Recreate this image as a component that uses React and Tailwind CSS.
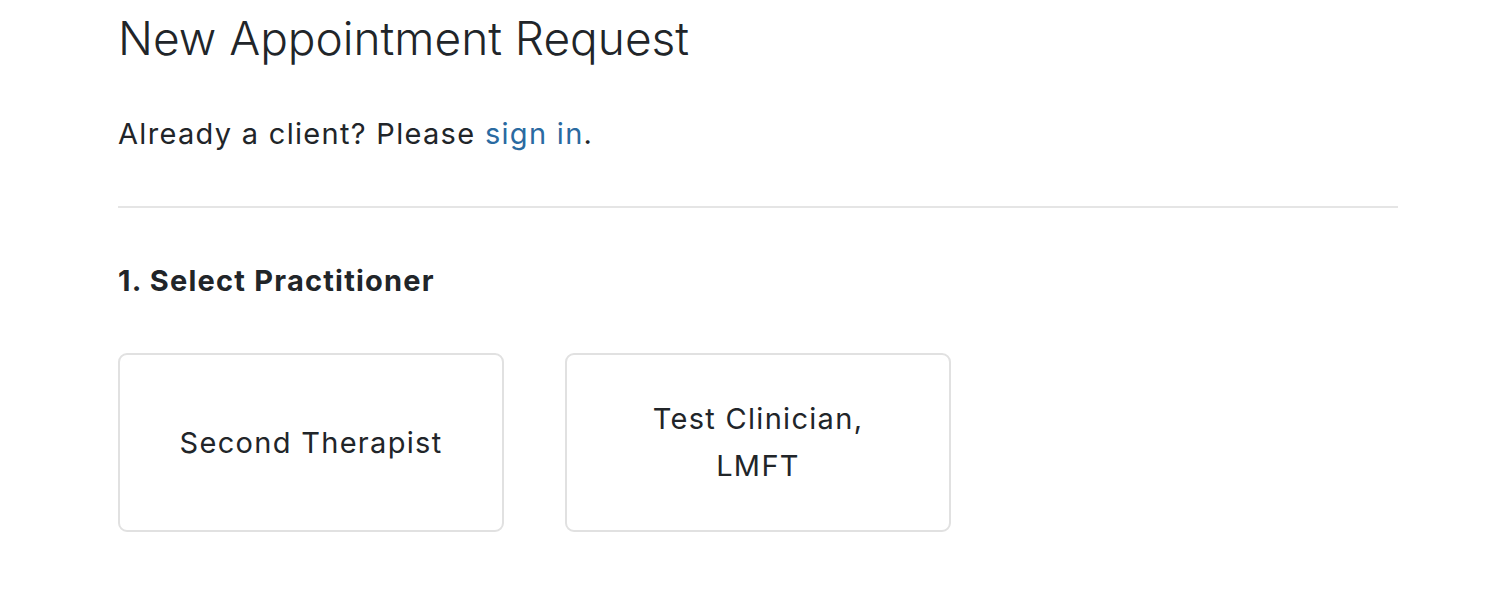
export default function App() {
  const practitioners = ["Second Therapist", "Test Clinician, LMFT"];

  return (
    <div className="min-h-screen bg-white text-[#212529] font-['Inter',sans-serif]">
      <div className="w-[1280px] ml-[118px]">
        <h1 className="text-[46px] font-light leading-[1.2] pt-[11px]">New Appointment Request</h1>
        <p className="text-[29px] tracking-[0.045em] leading-[1.5] mt-[46px]">
          Already a client? Please <a href="#" className="text-[#2a6aa1]">sign in</a>.
        </p>
        <hr className="border-t-2 border-[#e5e5e5] mt-[50px]" />
        <h2 className="text-[29px] tracking-[0.042em] font-bold leading-[1.2] mt-[56px]">1. Select Practitioner</h2>
        <div className="flex gap-[61px] mt-[55px]">
          {practitioners.map((name) => (
            <button
              key={name}
              className="w-[386px] h-[179px] border-2 border-[#e1e1e1] rounded-[9px] bg-white flex items-center justify-center px-[50px] text-[29px] tracking-[0.045em] leading-[1.62] text-center"
            >
              {name}
            </button>
          ))}
        </div>
      </div>
    </div>
  );
}
